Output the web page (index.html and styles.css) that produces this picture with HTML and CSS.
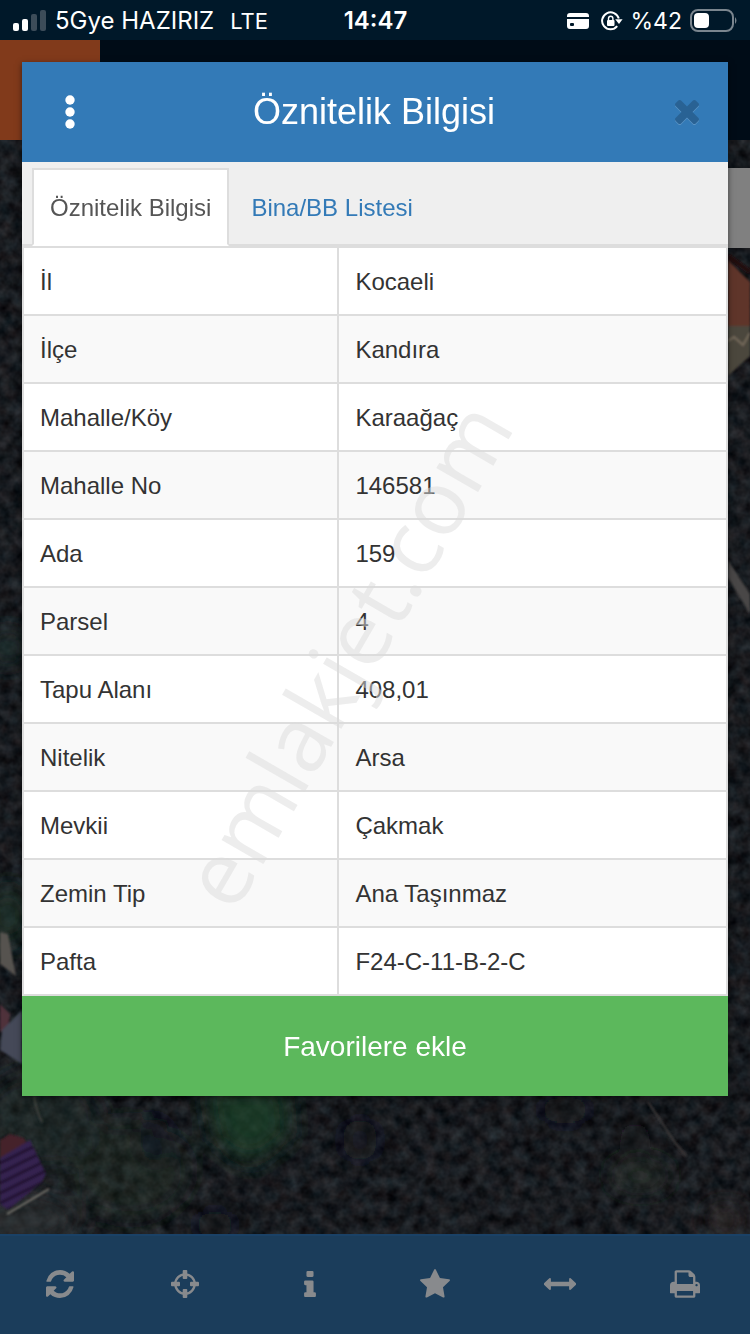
FILE: index.html
```html
<!DOCTYPE html>
<html lang="tr">
<head>
<meta charset="utf-8">
<meta name="viewport" content="width=device-width, initial-scale=1">
<title>Öznitelik Bilgisi</title>
<link rel="stylesheet" href="styles.css">
</head>
<body>
<header class="status">
  <div class="status-side">
    <svg class="signal" viewBox="0 0 34 22" aria-hidden="true">
      <rect x="0" y="13" width="6" height="8" rx="2" fill="#fff"/>
      <rect x="9" y="9" width="6" height="12" rx="2" fill="#fff"/>
      <rect x="18" y="4" width="6" height="17" rx="2" fill="#3c4c59"/>
      <rect x="27" y="0" width="6" height="21" rx="2" fill="#3c4c59"/>
    </svg>
    <span class="carrier">5Gye HAZIRIZ</span>
    <span class="network">LTE</span>
  </div>
  <time class="clock">14:47</time>
  <div class="status-side status-right">
    <svg class="card-icon" viewBox="0 0 22 16" aria-hidden="true">
      <path fill="#fff" d="M3 0h16a3 3 0 0 1 3 3v1H0V3a3 3 0 0 1 3-3zM0 6h22v7a3 3 0 0 1-3 3H3a3 3 0 0 1-3-3z"/>
      <rect x="3" y="10" width="4" height="3" rx="1" fill="#001829"/>
    </svg>
    <svg class="lock-icon" viewBox="0 0 22 20" aria-hidden="true">
      <path d="M16.200 15.200A8.500 8.500 0 1 1 17.800 7.600" fill="none" stroke="#fff" stroke-width="2"/>
      <path d="M14.200 8.200h7.400L18 13z" fill="#fff"/>
      <rect x="6" y="9" width="7.500" height="6" rx="1" fill="#fff"/>
      <path d="M7.500 9.500V7.500a2.200 2.200 0 0 1 4.400 0v2" fill="none" stroke="#fff" stroke-width="1.400"/>
    </svg>
    <span>%42</span>
    <svg class="battery" viewBox="0 0 48 24" aria-hidden="true">
      <rect x="1" y="1" width="42" height="21" rx="7" fill="none" stroke="#7a858e" stroke-width="2"/>
      <rect x="4" y="4" width="15" height="15" rx="4" fill="#fff"/>
      <path d="M45 8q3 3.500 0 7z" fill="#7a858e"/>
    </svg>
  </div>
</header>

<div class="stage">
  <div class="app">
    <div class="navbar"><div class="navbar-logo"></div></div>
    <div class="map">
      <svg class="terrain" viewBox="0 0 750 1094" preserveAspectRatio="xMidYMid slice" aria-hidden="true">
        <defs>
          <filter id="grain" x="0" y="0" width="100%" height="100%" color-interpolation-filters="sRGB">
            <feTurbulence type="fractalNoise" baseFrequency="0.080" numOctaves="3" seed="7"/>
            <feColorMatrix values="0.220 0.040 0 0 -0.034  0.220 0 0.040 0 -0.024  0.220 0 0.060 0 -0.018  0 0 0 0 1"/>
          </filter>
          <filter id="soft" x="-30%" y="-30%" width="160%" height="160%"><feGaussianBlur stdDeviation="12"/></filter>
          <filter id="edge" x="-30%" y="-30%" width="160%" height="160%"><feGaussianBlur stdDeviation="1"/></filter>
          <pattern id="stripes" width="12" height="9" patternUnits="userSpaceOnUse" patternTransform="rotate(-26)">
            <rect width="12" height="9" fill="#352050"/><rect width="12" height="3" fill="#241433"/>
          </pattern>
        </defs>
        <rect width="750" height="1094" filter="url(#grain)"/>
        <g filter="url(#soft)">
          <path d="M205 945h80l5 50-40 30-35-25z" fill="#1d4a2d" opacity=".65"/>
          <ellipse cx="130" cy="1030" rx="60" ry="50" fill="#27402e" opacity=".3"/>
          <ellipse cx="40" cy="980" rx="60" ry="50" fill="#243a33" opacity=".35"/>
          <ellipse cx="20" cy="1080" rx="60" ry="30" fill="#353b3c" opacity=".5"/>
          <ellipse cx="155" cy="1000" rx="14" ry="24" fill="#0c0f20" opacity=".7"/>
          <ellipse cx="215" cy="1085" rx="20" ry="14" fill="#0c0f20" opacity=".7"/>
          <ellipse cx="360" cy="1000" rx="18" ry="22" fill="#0c0f20" opacity=".6"/>
          <ellipse cx="565" cy="970" rx="26" ry="14" fill="#0c0f20" opacity=".6"/>
          <ellipse cx="635" cy="1000" rx="16" ry="18" fill="#0d0a0b" opacity=".7"/>
          <ellipse cx="8" cy="508" rx="20" ry="18" fill="#253a38" opacity=".6"/>
          <ellipse cx="8" cy="776" rx="22" ry="30" fill="#1e3a2e" opacity=".6"/>
          <ellipse cx="640" cy="1036" rx="30" ry="14" fill="#303c32" opacity=".6"/>
          <ellipse cx="725" cy="1080" rx="18" ry="14" fill="#51423e" opacity=".5"/>
        </g>
        <g filter="url(#edge)">
          <path d="M728 120l22 22v44h-22z" fill="#5e3429"/>
          <path d="M728 116l22 16" stroke="#22090c" stroke-width="5"/>
          <path d="M728 186h22v30l-22 20z" fill="#4c463e"/>
          <path d="M728 201l6-4 9 8 7-12" fill="none" stroke="#756b5c" stroke-width="2"/>
          <path d="M728 420l22 34v20l-22-36z" fill="#4a4746"/>
          <path d="M0 792l8 2 8 42-16-12z" fill="#57534f"/>
          <path d="M0 864l10 10-2 16-8 2z" fill="#50303a"/>
          <path d="M2 890l20-20v54l-22-14z" fill="#454a58"/>
          <path d="M0 1000l10-6 14 4 4 8-28 14z" fill="#45202c"/>
          <path d="M0 1018l30-18 16 34-4 8-34 28-8-6z" fill="url(#stripes)"/>
          <path d="M7 1074l42-25" stroke="#77746d" stroke-width="2"/>
          <path d="M34 956q2 14 8 26" fill="none" stroke="#3e3f3b" stroke-width="2"/>
          <path d="M648 962l28 42 10 12" fill="none" stroke="#3c3838" stroke-width="2"/>
        </g>
      </svg>
      <div class="map-control"></div>
    </div>
    <nav class="toolbar" aria-label="Harita araçları">
      <button type="button" aria-label="Yenile"><svg viewBox="0 0 1536 1536" width="28" height="28"><path d="M1511 928q0 5-1 7-64 268-268 434.500t-478 166.500q-146 0-282.500-55t-243.500-157l-129 129q-19 19-45 19t-45-19-19-45v-448q0-26 19-45t45-19h448q26 0 45 19t19 45-19 45l-137 137q71 66 161 102t187 36q134 0 250-65t186-179q11-17 53-117 8-23 30-23h192q13 0 22.500 9.500t9.500 22.500zm25-800v448q0 26-19 45t-45 19h-448q-26 0-45-19t-19-45 19-45l138-138q-148-137-349-137-134 0-250 65t-186 179q-11 17-53 117-8 23-30 23h-199q-13 0-22.500-9.500t-9.500-22.500v-7q65-268 270-434.500t480-166.500q146 0 284 55.500t245 156.500l130-129q19-19 45-19t45 19 19 45z"/></svg></button>
      <button type="button" aria-label="Konum"><svg viewBox="0 0 28 28" width="28" height="28"><circle cx="14" cy="14" r="9.700" fill="none" stroke="currentColor" stroke-width="2.300"/><rect x="0" y="11.700" width="9" height="4.600" rx="1"/><rect x="19" y="11.700" width="9" height="4.600" rx="1"/><rect x="11.700" y="0" width="4.600" height="9" rx="1"/><rect x="11.700" y="19" width="4.600" height="9" rx="1"/></svg></button>
      <button type="button" aria-label="Bilgi"><svg viewBox="0 128 640 1408" width="12" height="26"><path d="M640 1344v128q0 26-19 45t-45 19h-512q-26 0-45-19t-19-45v-128q0-26 19-45t45-19h64v-384h-64q-26 0-45-19t-19-45v-128q0-26 19-45t45-19h384q26 0 45 19t19 45v576h64q26 0 45 19t19 45zm-128-1152v192q0 26-19 45t-45 19h-256q-26 0-45-19t-19-45v-192q0-26 19-45t45-19h256q26 0 45 19t19 45z"/></svg></button>
      <button type="button" aria-label="Favoriler"><svg viewBox="0 32 1664 1664" width="30" height="30"><path d="M1664 647q0 22-26 48l-363 354 86 500q1 7 1 20 0 21-10.500 35.500t-30.500 14.500q-19 0-40-12l-449-236-449 236q-22 12-40 12-21 0-31.500-14.500t-10.500-35.500q0-6 2-20l86-500-364-354q-25-27-25-48 0-37 56-46l502-73 225-455q19-41 49-41t49 41l225 455 502 73q56 9 56 46z"/></svg></button>
      <button type="button" aria-label="Ölçüm"><svg viewBox="0 0 32 28" width="32" height="28"><path d="M0 13.300L5.300 8.200Q6.900 7.600 6.900 9.300V11.700H25.100V9.300Q25.100 7.600 26.700 8.200L32 13.300Q32.300 14 32 14.700L26.700 19.800Q25.100 20.400 25.100 18.700V16.300H6.900V18.700Q6.900 20.400 5.300 19.800L0 14.700Q-.3 14 0 13.300z"/></svg></button>
      <button type="button" aria-label="Yazdır"><svg viewBox="0 128 1664 1536" width="30" height="28"><path d="M384 1536h896v-256h-896v256zm0-640h896v-384h-160q-40 0-68-28t-28-68v-160h-640v640zm1152 64q0-26-19-45t-45-19-45 19-19 45 19 45 45 19 45-19 19-45zm128 0v416q0 13-9.500 22.500t-22.500 9.500h-224v160q0 40-28 68t-68 28h-960q-40 0-68-28t-28-68v-160h-224q-13 0-22.500-9.500t-9.500-22.500v-416q0-79 56.500-135.500t135.500-56.500h64v-544q0-40 28-68t68-28h672q40 0 88 20t76 48l152 152q28 28 48 76t20 88v256h64q79 0 135.500 56.500t56.500 135.500z"/></svg></button>
    </nav>
  </div>

  <div class="overlay">
    <section class="dialog" role="dialog" aria-labelledby="dialog-title">
      <div class="dialog-head">
        <button type="button" class="head-button" aria-label="Menü"><svg viewBox="0 0 10 34" width="10" height="34"><circle cx="5" cy="5" r="4.700"/><circle cx="5" cy="17" r="4.700"/><circle cx="5" cy="29" r="4.700"/></svg></button>
        <h1 class="dialog-title" id="dialog-title">Öznitelik Bilgisi</h1>
        <button type="button" class="head-button close" aria-label="Kapat"><svg viewBox="110 366 1188 1188" width="24" height="24"><path d="M1298 1322q0 40-28 68l-136 136q-28 28-68 28t-68-28l-294-294-294 294q-28 28-68 28t-68-28l-136-136q-28-28-28-68t28-68l294-294-294-294q-28-28-28-68t28-68l136-136q28-28 68-28t68 28l294 294 294-294q28-28 68-28t68 28l136 136q28 28 28 68t-28 68l-294 294 294 294q28 28 28 68z"/></svg></button>
      </div>
      <div class="tabs" role="tablist">
        <a class="tab tab-active" href="#attributes" role="tab" aria-selected="true">Öznitelik Bilgisi</a>
        <a class="tab" href="#buildings" role="tab" aria-selected="false">Bina/BB Listesi</a>
      </div>
      <div class="panel" id="attributes">
        <table class="attributes">
          <tbody>
            <tr><th scope="row">İl</th><td>Kocaeli</td></tr>
            <tr><th scope="row">İlçe</th><td>Kandıra</td></tr>
            <tr><th scope="row">Mahalle/Köy</th><td>Karaağaç</td></tr>
            <tr><th scope="row">Mahalle No</th><td>146581</td></tr>
            <tr><th scope="row">Ada</th><td>159</td></tr>
            <tr><th scope="row">Parsel</th><td>4</td></tr>
            <tr><th scope="row">Tapu Alanı</th><td>408,01</td></tr>
            <tr><th scope="row">Nitelik</th><td>Arsa</td></tr>
            <tr><th scope="row">Mevkii</th><td>Çakmak</td></tr>
            <tr><th scope="row">Zemin Tip</th><td>Ana Taşınmaz</td></tr>
            <tr><th scope="row">Pafta</th><td>F24-C-11-B-2-C</td></tr>
          </tbody>
        </table>
        <div class="watermark"><span>emlakjet.com</span></div>
      </div>
      <button type="button" class="favorite">Favorilere ekle</button>
    </section>
  </div>
</div>
</body>
</html>
```
FILE: styles.css
```css
* {
  box-sizing: border-box;
}

body {
  margin: 0;
  min-height: 100vh;
  display: flex;
  flex-direction: column;
  background: #15181d;
  font-family: "Liberation Sans", Arial, sans-serif;
  font-size: 24px;
  line-height: 34px;
  color: #333;
}

button {
  margin: 0;
  padding: 0;
  border: 0;
  background: none;
  font: inherit;
  cursor: pointer;
}

svg {
  display: block;
  fill: currentColor;
}

/* Status bar */
.status {
  display: grid;
  grid-template-columns: 1fr auto 1fr;
  align-items: center;
  height: 40px;
  padding: 2px 12px 0 13px;
  background: #001829;
  color: #fff;
  font-family: Inter, sans-serif;
  font-size: 23px;
}

.status-side {
  display: flex;
  align-items: center;
  gap: 8px;
  white-space: nowrap;
}

.status-right {
  justify-content: flex-end;
}

.carrier {
  margin-right: 8px;
  font-size: 24px;
}

.network {
  font-size: 22px;
}

.clock {
  font-size: 24px;
  font-weight: 600;
}

.signal {
  width: 34px;
  height: 22px;
}

.card-icon {
  width: 22px;
  height: 16px;
  margin-right: 4px;
}

.lock-icon {
  width: 22px;
  height: 20px;
}

.battery {
  width: 48px;
  height: 24px;
}

/* Map screen with the dialog stacked over it */
.stage {
  flex: 1;
  display: grid;
}

.app,
.overlay {
  grid-area: 1 / 1;
  min-width: 0;
}

.app {
  display: flex;
  flex-direction: column;
}

.navbar {
  height: 100px;
  background: #000c17;
}

.navbar-logo {
  width: 100px;
  height: 100%;
  background: #813a1b;
}

.map {
  flex: 1;
  position: relative;
  overflow: hidden;
}

.terrain {
  position: absolute;
  inset: 0;
  width: 100%;
  height: 100%;
}

.map-control {
  position: absolute;
  top: 28px;
  right: 0;
  width: 80px;
  height: 80px;
  background: #808080;
}

.toolbar {
  display: flex;
  height: 100px;
  padding-bottom: 2px;
  border-top: 2px solid #1a4166;
  background: #1b3d5b;
}

.toolbar button {
  flex: 1;
  display: flex;
  align-items: center;
  justify-content: center;
  padding-right: 5px;
  color: #888a8d;
}

/* Dialog */
.overlay {
  z-index: 1;
  padding: 22px;
}

.dialog {
  background: #efefef;
  box-shadow: 0 2px 6px rgba(0, 0, 0, 0.5);
}

.dialog-head {
  display: grid;
  grid-template-columns: 96px 1fr 82px;
  align-items: center;
  height: 100px;
  background: #337ab7;
  color: #fff;
}

.head-button {
  display: flex;
  align-items: center;
  justify-content: center;
  height: 100%;
  color: #fff;
}

.close {
  color: #296294;
  filter: drop-shadow(0 1px 0 #5a93c4);
}

.dialog-title {
  margin: 0;
  padding-right: 16px;
  font-size: 36px;
  font-weight: 400;
  line-height: 40px;
  text-align: center;
}

.tabs {
  display: flex;
  gap: 4px;
  padding: 6px 10px 0;
  border-bottom: 2px solid #ddd;
}

.tab {
  margin-bottom: -2px;
  padding: 21px 16px 19px;
  border: 2px solid transparent;
  color: #337ab7;
  text-decoration: none;
}

.tab-active {
  border-color: #ddd #ddd #fff;
  background: #fff;
  color: #555;
}

.panel {
  position: relative;
}

.attributes {
  width: 100%;
  border-collapse: collapse;
  table-layout: fixed;
  background: #fff;
}

.attributes th,
.attributes td {
  padding: 17px 16px 15px;
  border: 2px solid #ddd;
  font-weight: 400;
  text-align: left;
}

.attributes th {
  width: 44.8%;
}

.attributes tr:nth-child(even) {
  background: #f9f9f9;
}

.watermark {
  position: absolute;
  inset: 0;
  display: grid;
  place-items: center;
  padding: 64px 60px 0 0;
  overflow: hidden;
  pointer-events: none;
}

.watermark span {
  transform: rotate(-60deg);
  font-family: "Open Sans", sans-serif;
  font-size: 90px;
  line-height: 100px;
  color: rgba(220, 220, 220, 0.5);
}

.favorite {
  display: block;
  width: 100%;
  height: 100px;
  padding-top: 2px;
  background: #5cb85c;
  color: #fff;
  font-size: 28px;
}
```
